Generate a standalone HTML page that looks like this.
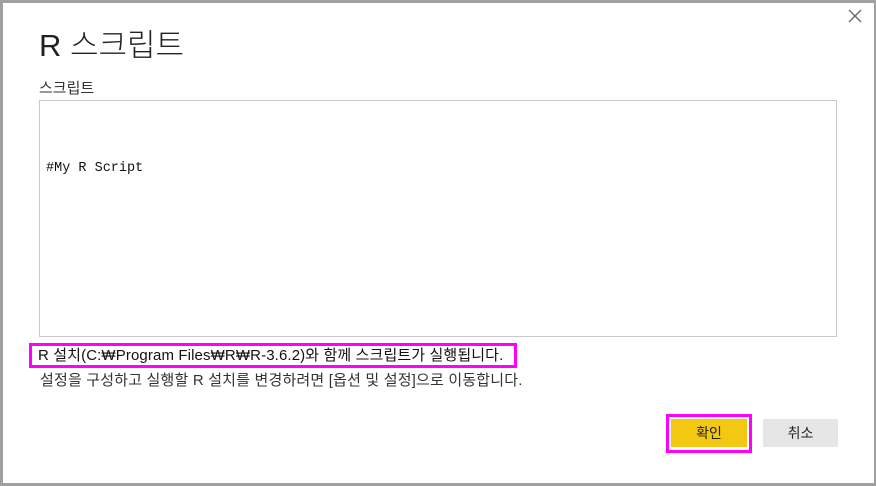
<!DOCTYPE html>
<html><head><meta charset="utf-8"><style>
body{margin:0;width:876px;height:486px;overflow:hidden;background:#a0a0a0;position:relative;font-family:"Liberation Sans","Noto Sans CJK KR",sans-serif;}
.d{position:absolute;left:3px;top:3px;width:871px;height:480px;background:#fff;}
.a{position:absolute;white-space:nowrap;color:#252423;}
</style></head><body>
<div class="d"></div>
<svg style="position:absolute;left:847px;top:8px" width="16" height="16"><path d="M2 2L14 14M14 2L2 14" stroke="#666" stroke-width="1.3"/></svg>
<div class="a" style="left:39px;top:20px;font-size:31px;font-weight:300;color:#222">R 스크립트</div>
<div class="a" style="left:39px;top:77px;font-size:15px;color:#333">스크립트</div>
<div style="position:absolute;left:39px;top:100px;width:796px;height:235px;border:1px solid #c8c8c8"></div>
<div class="a" style="left:46px;top:161px;font-size:13.5px;font-family:'Liberation Mono',monospace;color:#111">#My R Script</div>
<div style="position:absolute;left:29px;top:343px;width:482px;height:19px;border:3px solid #f0f"></div>
<div class="a" style="left:38px;top:344px;font-size:15px;letter-spacing:0.12px;color:#111">R 설치(C:₩Program Files₩R₩R-3.6.2)와 함께 스크립트가 실행됩니다.</div>
<div class="a" style="left:40px;top:369px;font-size:15px;letter-spacing:0.18px;color:#333">설정을 구성하고 실행할 R 설치를 변경하려면 [옵션 및 설정]으로 이동합니다.</div>
<div style="position:absolute;left:666px;top:414px;width:80px;height:33px;border:3px solid #f0f"></div>
<div style="position:absolute;left:671px;top:419px;width:76px;height:28px;background:#f2c811;text-align:center;line-height:28px;font-size:14px;color:#222">확인</div>
<div style="position:absolute;left:763px;top:419px;width:75px;height:28px;background:#e6e6e6;text-align:center;line-height:28px;font-size:14px;color:#222">취소</div>
</body></html>
